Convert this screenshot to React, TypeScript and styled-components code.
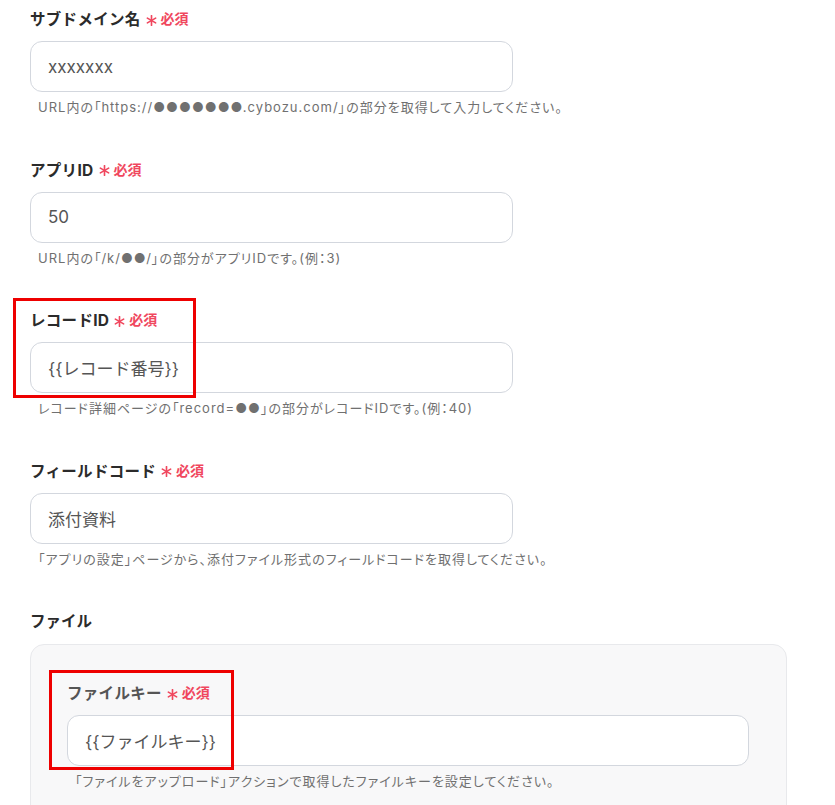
import React from "react";
import styled, { createGlobalStyle } from "styled-components";

const GlobalStyle = createGlobalStyle`
  body {
    margin: 0;
    background: #ffffff;
    font-family: "Inter", "Noto Sans CJK JP", sans-serif;
    color: #2b2b2b;
  }
`;

const Page = styled.div`
  padding: 7px 0 0 30px;
  width: 757px;
`;

const Field = styled.div`
  position: relative;
  margin-bottom: 41.5px;
`;

const Label = styled.div<{ $muted?: boolean }>`
  display: flex;
  align-items: center;
  height: 22px;
  font-size: 15.5px;
  font-weight: 700;
  letter-spacing: 0.3px;
  color: ${(p) => (p.$muted ? "#555555" : "#2b2b2b")};
  margin-bottom: 12px;
`;

const Required = styled.span`
  display: inline-flex;
  align-items: center;
  color: #f0475e;
  font-size: 14px;
  font-weight: 700;
  letter-spacing: 0;
  margin-left: 5px;
  gap: 4px;

  svg {
    position: relative;
    top: 2px;
  }
`;

const Input = styled.div<{ $wide?: boolean }>`
  box-sizing: border-box;
  width: ${(p) => (p.$wide ? "682px" : "483px")};
  height: 51px;
  border: 1px solid #d3d7de;
  border-radius: 12px;
  background: #ffffff;
  display: flex;
  align-items: center;
  padding-left: 17px;
  font-size: 17px;
  color: #555555;
`;

const Help = styled.div`
  font-size: 13px;
  line-height: 18px;
  letter-spacing: 1px;
  font-feature-settings: "palt";
  color: #707070;
  margin-top: 6px;
  padding-left: 8px;
`;

const Highlight = styled.div<{ $w: number }>`
  position: absolute;
  left: -17px;
  top: -10px;
  width: ${(p) => p.$w}px;
  height: 100px;
  box-sizing: border-box;
  border: 3px solid #ee0000;
  pointer-events: none;
`;

const SectionTitle = styled.div`
  height: 22px;
  display: flex;
  align-items: center;
  font-size: 15.5px;
  font-weight: 700;
  margin-bottom: 13px;
`;

const Panel = styled.div`
  box-sizing: border-box;
  width: 757px;
  height: 200px;
  background: #f8f8f9;
  border: 1px solid #e8e9ec;
  border-radius: 14px;
  padding: 36px 37px 0 36px;
`;

const PanelField = styled.div`
  position: relative;
`;

const fields = [
  {
    label: "サブドメイン名",
    value: "xxxxxxx",
    help: "URL内の「https://●●●●●●●.cybozu.com/」の部分を取得して入力してください。",
  },
  {
    label: "アプリID",
    value: "50",
    help: "URL内の「/k/●●/」の部分がアプリIDです。(例：3)",
  },
  {
    label: "レコードID",
    value: "{{レコード番号}}",
    help: "レコード詳細ページの「record=●●」の部分がレコードIDです。(例：40)",
    mark: 183,
  },
  {
    label: "フィールドコード",
    value: "添付資料",
    help: "「アプリの設定」ページから、添付ファイル形式のフィールドコードを取得してください。",
  },
];

const RequiredMark = () => (
  <Required>
    <svg width="11" height="11" viewBox="0 0 12 12">
      <g stroke="currentColor" strokeWidth="1.8" strokeLinecap="round">
        <line x1="6" y1="0.8" x2="6" y2="11.2" />
        <line x1="1.5" y1="3.4" x2="10.5" y2="8.6" />
        <line x1="1.5" y1="8.6" x2="10.5" y2="3.4" />
      </g>
    </svg>
    必須
  </Required>
);

export default function App() {
  return (
    <>
      <GlobalStyle />
      <Page>
        {fields.map((f) => (
          <Field key={f.label}>
            {f.mark && <Highlight $w={f.mark} />}
            <Label>
              {f.label}
              <RequiredMark />
            </Label>
            <Input>{f.value}</Input>
            <Help>{f.help}</Help>
          </Field>
        ))}
        <SectionTitle>ファイル</SectionTitle>
        <Panel>
          <PanelField>
            <Highlight $w={185} style={{ left: -18, top: -11 }} />
            <Label $muted>
              ファイルキー
              <RequiredMark />
            </Label>
            <Input $wide>{"{{ファイルキー}}"}</Input>
            <Help>「ファイルをアップロード」アクションで取得したファイルキーを設定してください。</Help>
          </PanelField>
        </Panel>
      </Page>
    </>
  );
}
